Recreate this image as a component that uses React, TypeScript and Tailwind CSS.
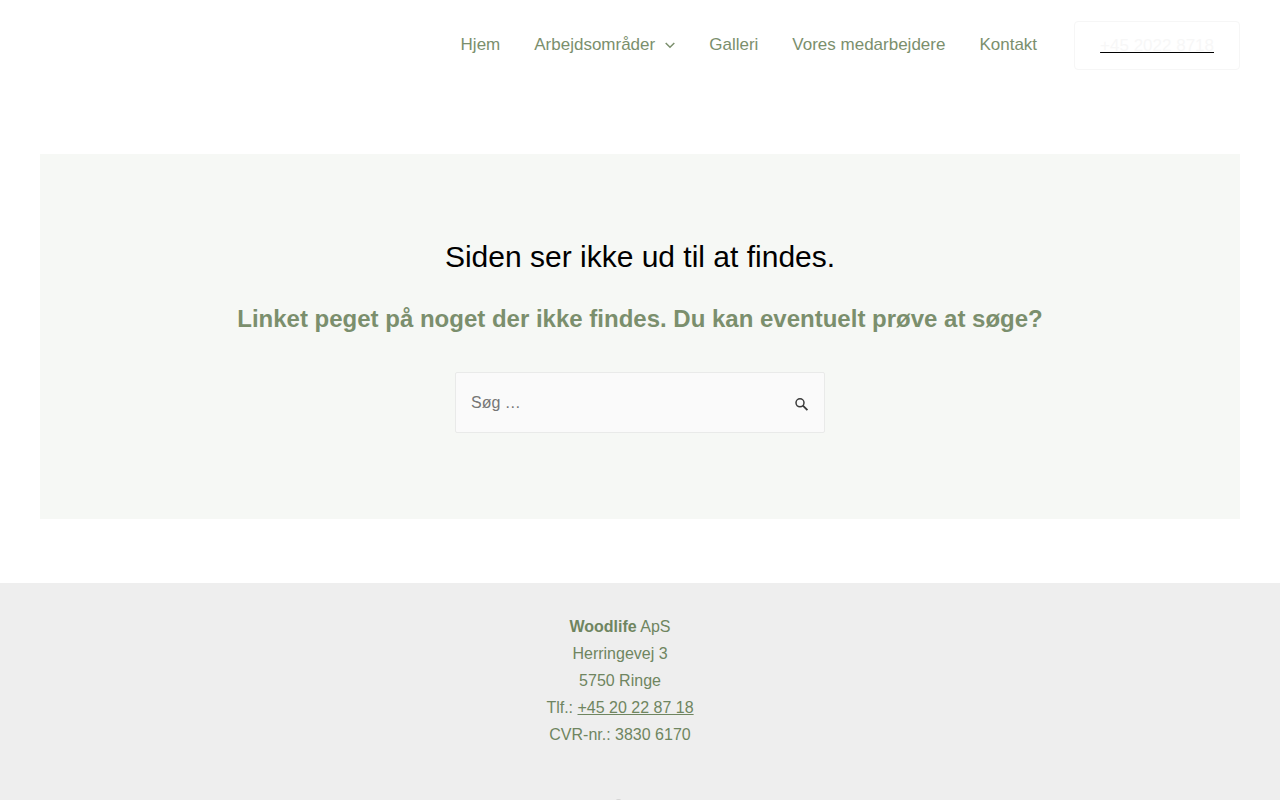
const navItems = [
  { label: 'Hjem' },
  { label: 'Arbejdsområder', hasMenu: true },
  { label: 'Galleri' },
  { label: 'Vores medarbejdere' },
  { label: 'Kontakt' },
];

function Header() {
  return (
    <header className="flex min-h-[90px] items-center justify-end px-10">
      <nav className="mr-5 flex text-[17px] text-[#7b8f6d]">
        {navItems.map((item) => (
          <a key={item.label} href="#" className="flex items-center px-[17px] leading-7">
            {item.label}
            {item.hasMenu && (
              <svg className="ml-2.5 h-2.5 w-2.5" viewBox="0 0 10 10" fill="none" stroke="currentColor" strokeWidth="1.5">
                <path d="M0.7 3 L5 7.3 L9.3 3" />
              </svg>
            )}
          </a>
        ))}
      </nav>
      <a
        href="tel:+4520228718"
        className="rounded-[4px] border border-[#f6f6f6] px-[25px] py-[15px] text-[17px] leading-[17px] text-[#f7f7f7] underline decoration-black decoration-1 underline-offset-1"
      >
        +45 2022 8718
      </a>
    </header>
  );
}

function SearchForm() {
  return (
    <form role="search" className="mx-auto mt-[37px] flex w-full max-w-[370px] rounded-[2px] border border-[#e9eae9] bg-[#fafafa]">
      <input
        type="search"
        aria-label="Søg efter"
        placeholder="Søg …"
        className="h-[59px] min-w-0 flex-1 bg-transparent pl-[15px] text-base text-[#666] outline-none placeholder:text-[#757575]"
      />
      <button type="submit" aria-label="Søg" className="flex w-11 items-center justify-center pt-1">
        <svg className="h-4 w-4" viewBox="0 0 16 16" fill="none" stroke="#3a3a3a">
          <circle cx="6" cy="5.8" r="4" strokeWidth="1.5" />
          <path d="M8.9 8.7 L13.4 13.2" strokeWidth="1.9" />
        </svg>
      </button>
    </form>
  );
}

function Footer() {
  return (
    <footer className="bg-[#eee] pt-[30px] pr-10 text-center text-base leading-[27px] text-[#6f8560]">
      <p>
        <strong>Woodlife</strong> ApS
      </p>
      <p>Herringevej 3</p>
      <p>5750 Ringe</p>
      <p>
        Tlf.:{' '}
        <a href="tel:+4520228718" className="underline">
          +45 20 22 87 18
        </a>
      </p>
      <p>CVR-nr.: 3830 6170</p>
      <svg className="mx-auto mt-[51px] h-6 w-6" viewBox="0 0 24 24" fill="none" stroke="#ccc" aria-hidden="true">
        <circle cx="10.5" cy="4.5" r="4" />
      </svg>
    </footer>
  );
}

export default function App() {
  return (
    <div className="bg-white font-['Liberation_Sans',Arial,sans-serif]">
      <Header />
      <main className="px-10 py-16">
        <section className="bg-[#f6f8f5] px-5 pt-20 pb-[86px] text-center">
          <h1 className="text-[30px] leading-[45px] text-black">Siden ser ikke ud til at findes.</h1>
          <p className="mt-6 text-2xl leading-8 font-bold text-[#7b8f6d]">
            Linket peget på noget der ikke findes. Du kan eventuelt prøve at søge?
          </p>
          <SearchForm />
        </section>
      </main>
      <Footer />
    </div>
  );
}
